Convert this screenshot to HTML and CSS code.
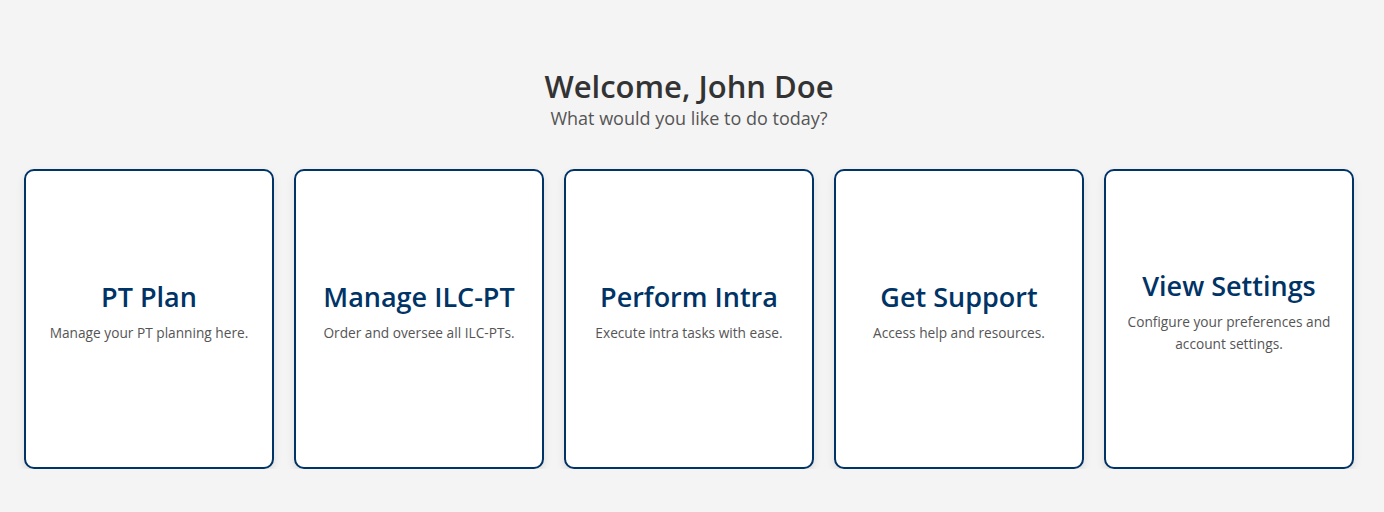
FILE: index.html
```html
<!DOCTYPE html>
<html lang="en">
<head>
<meta charset="utf-8">
<title>Dashboard</title>
<link rel="stylesheet" href="styles.css">
</head>
<body>
<main class="page">
  <header class="welcome">
    <h1 class="welcome-title">Welcome, John Doe</h1>
    <p class="welcome-sub">What would you like to do today?</p>
  </header>
  <section class="cards">
    <a class="card" href="#">
      <h2 class="card-title">PT Plan</h2>
      <p class="card-desc">Manage your PT planning here.</p>
    </a>
    <a class="card" href="#">
      <h2 class="card-title">Manage ILC-PT</h2>
      <p class="card-desc">Order and oversee all ILC-PTs.</p>
    </a>
    <a class="card" href="#">
      <h2 class="card-title">Perform Intra</h2>
      <p class="card-desc">Execute intra tasks with ease.</p>
    </a>
    <a class="card" href="#">
      <h2 class="card-title">Get Support</h2>
      <p class="card-desc">Access help and resources.</p>
    </a>
    <a class="card" href="#">
      <h2 class="card-title">View Settings</h2>
      <p class="card-desc">Configure your preferences and account settings.</p>
    </a>
  </section>
</main>
</body>
</html>
```
FILE: styles.css
```css
html, body {
  margin: 0;
  padding: 0;
  background: #f4f4f4;
  font-family: "Open Sans", "Noto Sans", "Liberation Sans", sans-serif;
}
.page {
  padding: 66px 30px 0 24px;
}
.welcome {
  text-align: center;
}
.welcome-title {
  margin: 0;
  font-size: 31px;
  font-weight: 600;
  line-height: 40px;
  color: #333;
}
.welcome-sub {
  margin: 0;
  font-size: 18px;
  line-height: 25px;
  color: #555;
}
.cards {
  margin-top: 38px;
  display: flex;
  gap: 20px;
}
.card {
  box-sizing: border-box;
  width: 250px;
  height: 300px;
  background: #fff;
  border: 2px solid #003366;
  border-radius: 10px;
  box-shadow: 0 4px 8px rgba(0, 0, 0, 0.1);
  display: flex;
  flex-direction: column;
  align-items: center;
  justify-content: center;
  text-align: center;
  text-decoration: none;
  padding: 0 16px 14px;
}
.card-title {
  margin: 0 0 8px;
  font-size: 27px;
  font-weight: 600;
  line-height: 34px;
  color: #003366;
}
.card-desc {
  margin: 0;
  font-size: 13.7px;
  line-height: 22px;
  color: #555;
}
```
